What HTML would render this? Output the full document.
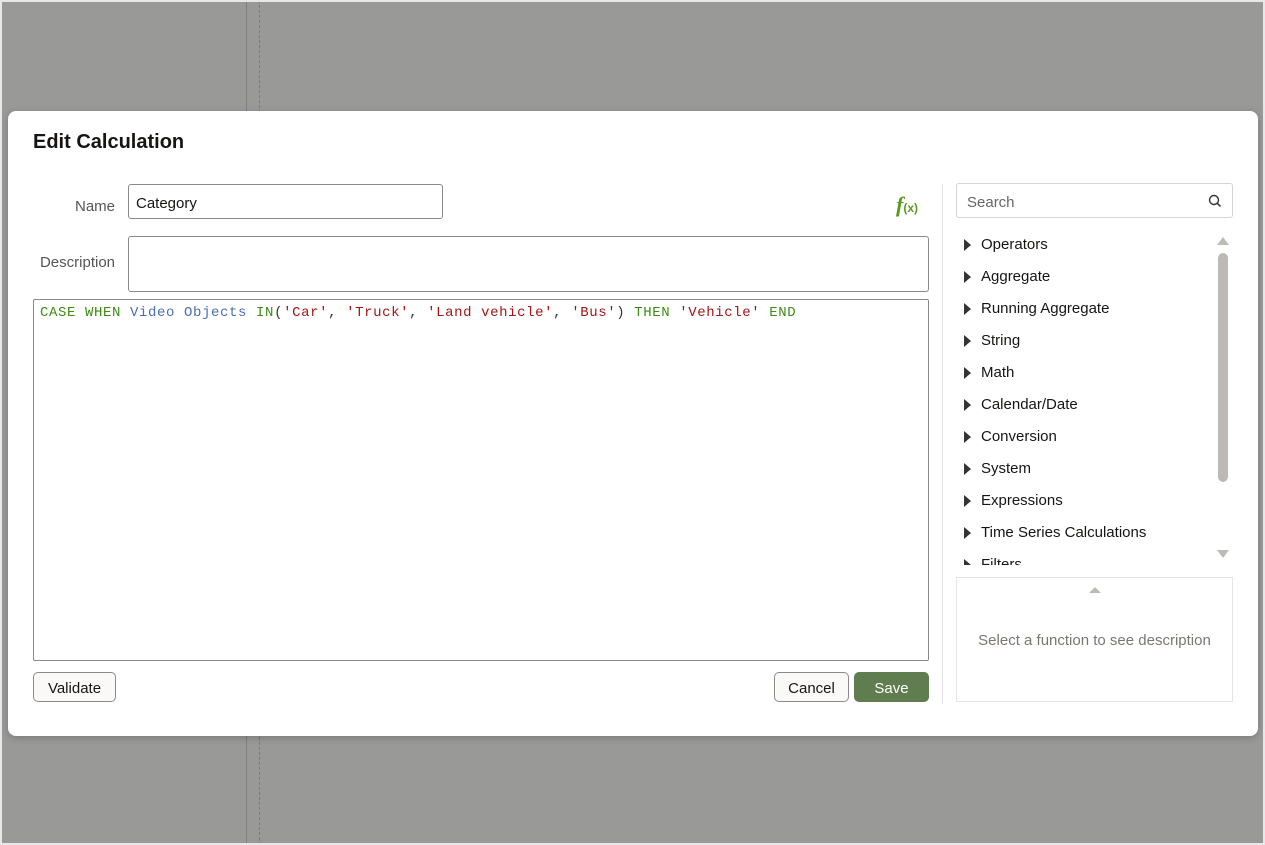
<!DOCTYPE html>
<html><head><meta charset="utf-8"><style>
*{box-sizing:border-box;margin:0;padding:0}
body{width:1265px;height:845px;background:#999998;font-family:"Liberation Sans",sans-serif;position:relative;overflow:hidden}
.frame{position:absolute;left:0;top:0;width:1265px;height:845px;border:2px solid #e8e8e8;pointer-events:none}
.vl{position:absolute;top:0;height:845px;left:246px;border-left:1px solid #7f7f7f}
.vd{position:absolute;top:0;height:845px;left:259px;border-left:1px dashed #7a7a7a}
.dlg{position:absolute;left:8px;top:111px;width:1250px;height:625px;background:#fff;border-radius:8px;box-shadow:0 2px 8px rgba(0,0,0,.2)}
h1{position:absolute;left:25px;top:20px;font-size:20px;font-weight:bold;color:#161513}
.lbl{position:absolute;font-size:15px;color:#555;text-align:right;width:80px}
.inp{position:absolute;border:1px solid #8a8a8a;border-radius:3px;background:#fff}
.code{position:absolute;left:25px;top:188px;width:896px;height:362px;border:1px solid #8a8a8a;border-radius:2px;font-family:"Liberation Mono",monospace;font-size:14px;letter-spacing:0.6px;padding:5px 6px;white-space:pre}
.g{color:#3c8b16}.b{color:#4a6fb5}.r{color:#a31515}.k{color:#333}
.btn{position:absolute;height:30px;border:1px solid #8a8a8a;border-radius:5px;font-size:15px;color:#161513;background:#fbf9f8;text-align:center;line-height:31px}
.sep{position:absolute;left:934px;top:73px;height:520px;border-left:1px solid #e4e4e4}
.srch{position:absolute;left:948px;top:72px;width:277px;height:35px;border:1px solid #d5d5d5;border-radius:3px;font-size:15px;color:#666;padding:10px 10px 0}
.list{position:absolute;left:954px;top:122px;width:250px;height:332px;overflow:hidden}
.it{height:32px;font-size:15px;color:#161513;position:relative;padding-left:19px;line-height:24px}
.it:before{content:"";position:absolute;left:2px;top:6px;border-left:7px solid #333;border-top:6px solid transparent;border-bottom:6px solid transparent}
.desc{position:absolute;left:948px;top:466px;width:277px;height:125px;border:1px solid #e4e4e4;font-size:15px;color:#7a7672;text-align:center;padding-top:54px}
</style></head><body>
<div class="vl"></div><div class="vd"></div>
<div class="dlg">
<h1>Edit Calculation</h1>
<div class="lbl" style="left:27px;top:87px">Name</div>
<div class="inp" style="left:120px;top:73px;width:315px;height:35px;font-size:15px;color:#161513;padding:10px 7px 0">Category</div>
<div style="position:absolute;left:888px;top:81px;color:#5a9a1e;font-family:'Liberation Serif',serif;font-style:italic;font-weight:bold;font-size:22px">f<span style="font-style:normal;font-family:'Liberation Sans';font-size:12px">(x)</span></div>
<div class="lbl" style="left:27px;top:143px">Description</div>
<div class="inp" style="left:120px;top:125px;width:801px;height:56px"></div>
<div class="code"><span class="g">CASE WHEN </span><span class="b">Video Objects </span><span class="g">IN</span><span class="k">(</span><span class="r">'Car'</span><span class="k">, </span><span class="r">'Truck'</span><span class="k">, </span><span class="r">'Land vehicle'</span><span class="k">, </span><span class="r">'Bus'</span><span class="k">) </span><span class="g">THEN </span><span class="r">'Vehicle' </span><span class="g">END</span></div>
<div class="btn" style="left:25px;top:561px;width:83px">Validate</div>
<div class="btn" style="left:766px;top:561px;width:75px">Cancel</div>
<div class="btn" style="left:846px;top:561px;width:75px;background:#5f7d4f;border-color:#5f7d4f;color:#fff">Save</div>
<div class="sep"></div>
<div class="srch">Search<svg style="position:absolute;right:10px;top:10px" width="14" height="14" viewBox="0 0 14 14"><circle cx="6" cy="6" r="4.5" fill="none" stroke="#333" stroke-width="1.4"/><path d="M9.3 9.3L12.5 12.5" stroke="#333" stroke-width="1.5"/></svg></div>
<div class="list">
<div class="it">Operators</div><div class="it">Aggregate</div><div class="it">Running Aggregate</div><div class="it">String</div><div class="it">Math</div><div class="it">Calendar/Date</div><div class="it">Conversion</div><div class="it">System</div><div class="it">Expressions</div><div class="it">Time Series Calculations</div><div class="it">Filters</div>
</div>
<div style="position:absolute;left:1209px;top:126px;border-bottom:8px solid #bdbab6;border-left:6px solid transparent;border-right:6px solid transparent"></div>
<div style="position:absolute;left:1210px;top:142px;width:10px;height:229px;background:#bdbab6;border-radius:5px"></div>
<div style="position:absolute;left:1209px;top:439px;border-top:8px solid #bdbab6;border-left:6px solid transparent;border-right:6px solid transparent"></div>
<div class="desc">Select a function to see description</div>
<div style="position:absolute;left:1081px;top:476px;border-bottom:6px solid #bdbab6;border-left:6px solid transparent;border-right:6px solid transparent"></div>
</div>
<div class="frame"></div>
</body></html>
